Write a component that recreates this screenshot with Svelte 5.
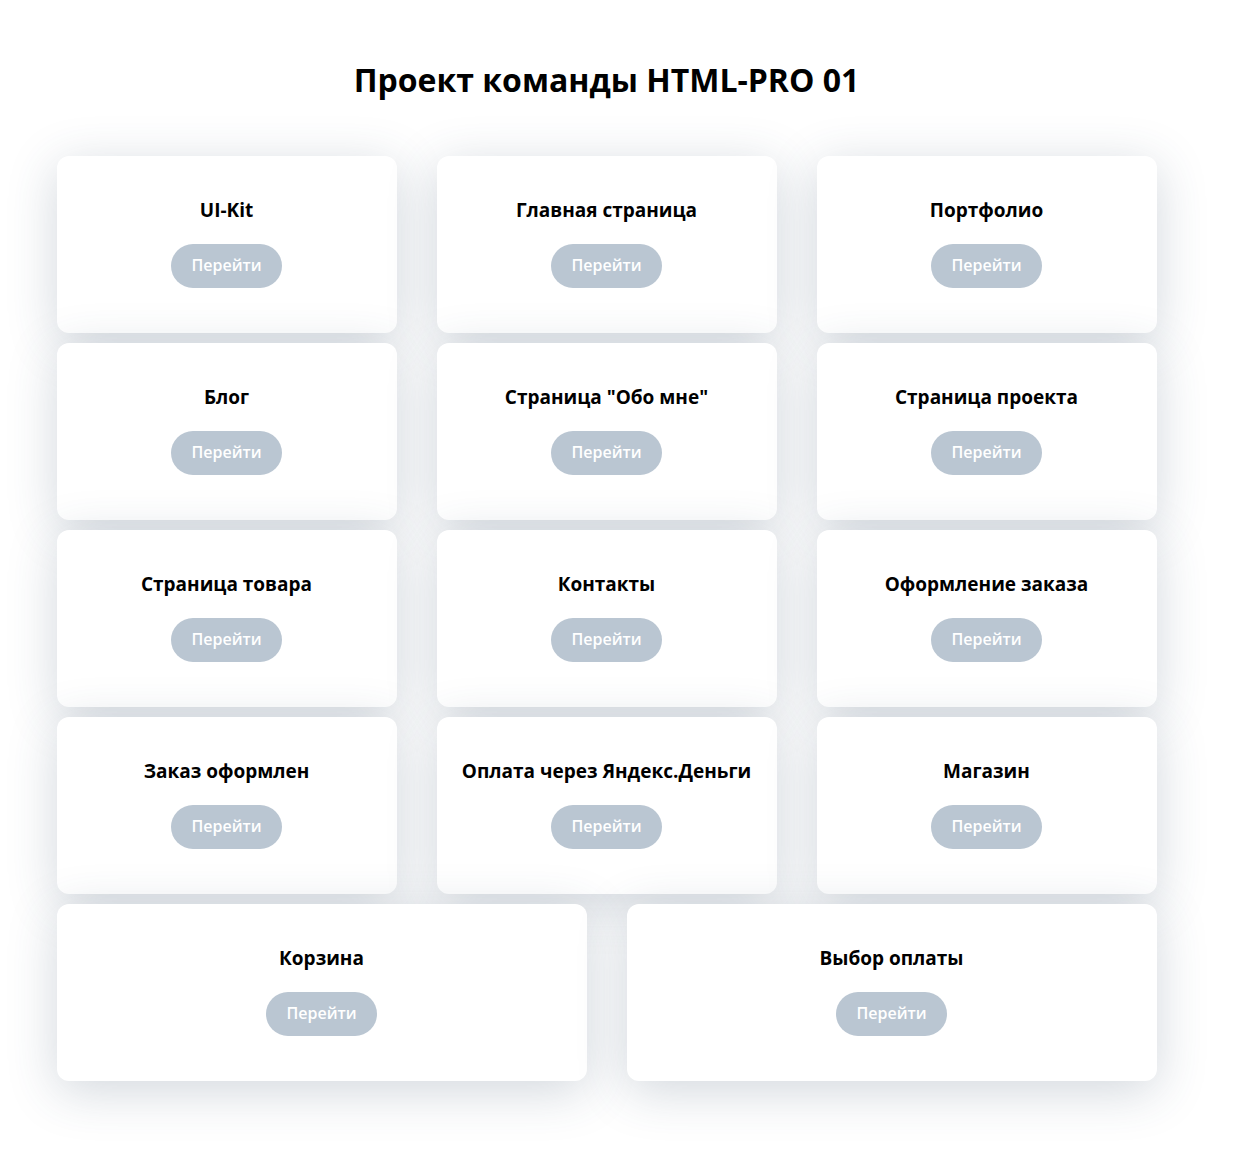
<script>
  const pages = [
    'UI-Kit',
    'Главная страница',
    'Портфолио',
    'Блог',
    'Страница "Обо мне"',
    'Страница проекта',
    'Страница товара',
    'Контакты',
    'Оформление заказа',
    'Заказ оформлен',
    'Оплата через Яндекс.Деньги',
    'Магазин',
    'Корзина',
    'Выбор оплаты'
  ];
</script>

<main class="page">
  <h1>Проект команды HTML-PRO 01</h1>
  <div class="cards">
    {#each pages as page}
      <section class="card">
        <h2>{page}</h2>
        <a class="button" href="#top">Перейти</a>
      </section>
    {/each}
  </div>
</main>

<style>
  :global(body) {
    margin: 0;
    background: #fff;
  }

  .page {
    max-width: 1100px;
    margin: 0 auto;
    padding: 56px 56px 77px 20px;
    font-family: 'Open Sans', sans-serif;
    color: #000;
  }

  h1 {
    margin: 0 0 52px;
    font-size: 32px;
    line-height: 48px;
    font-weight: 700;
    text-align: center;
  }

  .cards {
    display: flex;
    flex-wrap: wrap;
    gap: 10px 40px;
  }

  .card {
    box-sizing: border-box;
    flex: 1 1 340px;
    padding: 40px 20px 45px;
    border-radius: 12px;
    background: #fff;
    box-shadow: 0 10px 50px rgba(52, 73, 100, 0.22);
    text-align: center;
  }

  h2 {
    margin: 0 0 20px;
    font-size: 19px;
    line-height: 28px;
    font-weight: 700;
  }

  .button {
    display: inline-block;
    padding: 9px 20px 11px;
    border-radius: 22px;
    background: #bac6d2;
    color: #fff;
    font-size: 16px;
    line-height: 24px;
    font-weight: 600;
    text-decoration: none;
    vertical-align: top;
  }
</style>
